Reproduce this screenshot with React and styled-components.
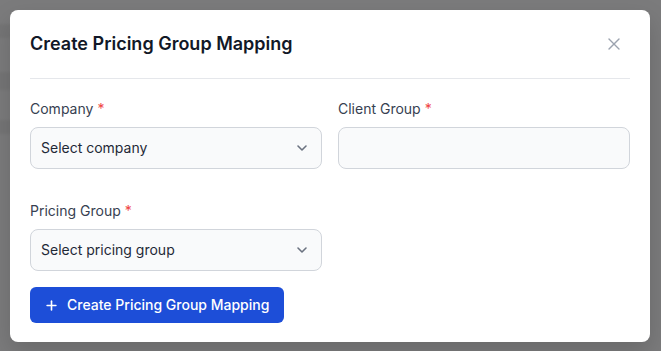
import React from "react";
import styled, { createGlobalStyle } from "styled-components";
import { ChevronDown, Plus, X } from "lucide-react";

const Global = createGlobalStyle`
  *, *::before, *::after { box-sizing: border-box; }
  html, body { margin: 0; padding: 0; }
  body {
    font-family: Inter, "Noto Sans", Arial, sans-serif;
    background: #7b7b7c;
    -webkit-font-smoothing: antialiased;
  }
`;

const Backdrop = styled.div`
  min-height: 351px;
  padding: 10px 11px 9px 10px;
  background:
    linear-gradient(to bottom,
      transparent 22px, rgba(0,0,0,0.05) 26px, rgba(0,0,0,0.05) 36px, transparent 40px,
      transparent 70px, rgba(0,0,0,0.05) 74px, rgba(0,0,0,0.05) 88px, transparent 92px,
      transparent 118px, rgba(0,0,0,0.05) 122px, rgba(0,0,0,0.05) 132px, transparent 136px) left top / 10px 100% no-repeat,
    #7b7b7c;
`;

const Modal = styled.div`
  width: 640px;
  background: #ffffff;
  border-radius: 8px;
  padding: 20px 20px 19px;
  box-shadow: 0 10px 25px rgba(0, 0, 0, 0.15);
`;

const Header = styled.div`
  display: flex;
  align-items: center;
  justify-content: space-between;
  padding-bottom: 20px;
  border-bottom: 1px solid #e5e7eb;
`;

const Title = styled.h2`
  margin: 0;
  font-size: 18px;
  line-height: 28px;
  font-weight: 600;
  color: #111827;
`;

const CloseButton = styled.button`
  display: flex;
  align-items: center;
  justify-content: center;
  padding: 0;
  margin-right: 6px;
  border: none;
  background: transparent;
  color: #9ca3af;
  cursor: pointer;
`;

const Form = styled.div`
  display: grid;
  grid-template-columns: 1fr 1fr;
  column-gap: 16px;
  row-gap: 32px;
  padding-top: 20px;
`;

const Field = styled.div`
  display: flex;
  flex-direction: column;
  gap: 8px;
`;

const Label = styled.label`
  font-size: 14px;
  line-height: 20px;
  font-weight: 400;
  color: #374151;
`;

const Required = styled.span`
  color: #ef4444;
  margin-left: 4px;
`;

const Control = styled.div`
  height: 42px;
  display: flex;
  align-items: center;
  justify-content: space-between;
  padding: 0 11px 0 10px;
  background: #f9fafb;
  border: 1px solid #d1d5db;
  border-radius: 8px;
  font-size: 14px;
  line-height: 20px;
  color: #1f2937;
`;

const Chevron = styled(ChevronDown)`
  color: #6b7280;
  flex-shrink: 0;
`;

const Actions = styled.div`
  padding-top: 16px;
`;

const PrimaryButton = styled.button`
  display: inline-flex;
  align-items: center;
  gap: 8px;
  height: 36px;
  padding: 0 15px 0 14px;
  border: none;
  border-radius: 6px;
  background: #1d4ed8;
  color: #ffffff;
  font-family: inherit;
  font-size: 14px;
  line-height: 20px;
  font-weight: 500;
  cursor: pointer;
`;

function SelectField({ label, placeholder, chevron = true }) {
  return (
    <Field>
      <Label>
        {label}
        <Required>*</Required>
      </Label>
      <Control>
        <span>{placeholder}</span>
        {chevron && <Chevron size={16} strokeWidth={2.4} />}
      </Control>
    </Field>
  );
}

export default function App() {
  return (
    <>
      <Global />
      <Backdrop>
        <Modal>
          <Header>
            <Title>Create Pricing Group Mapping</Title>
            <CloseButton aria-label="Close">
              <X size={20} strokeWidth={1.6} />
            </CloseButton>
          </Header>
          <Form>
            <SelectField label="Company" placeholder="Select company" />
            <SelectField label="Client Group" placeholder="" chevron={false} />
            <SelectField label="Pricing Group" placeholder="Select pricing group" />
          </Form>
          <Actions>
            <PrimaryButton>
              <Plus size={15} strokeWidth={2.6} />
              Create Pricing Group Mapping
            </PrimaryButton>
          </Actions>
        </Modal>
      </Backdrop>
    </>
  );
}
